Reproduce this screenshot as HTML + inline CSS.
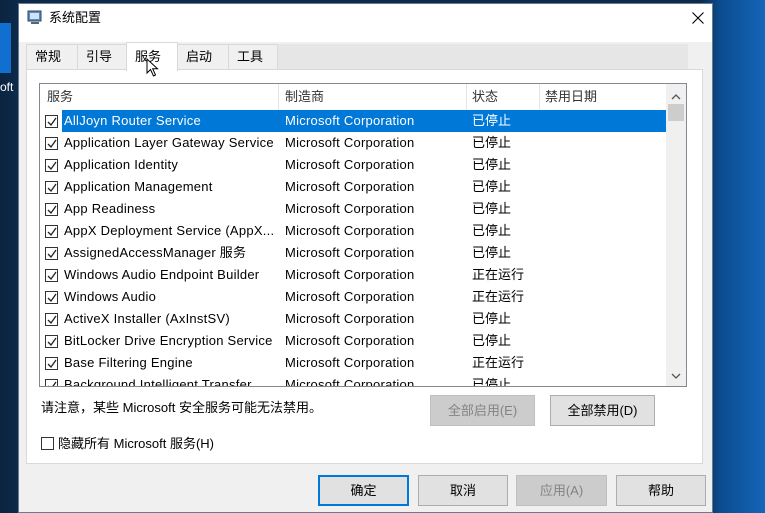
<!DOCTYPE html><html><head><meta charset="utf-8"><style>
*{box-sizing:border-box;margin:0;padding:0}
body{width:765px;height:510px;overflow:hidden;position:relative;background:linear-gradient(90deg,#0a2440 0,#0d2a4b 20px,#0d2a4b 700px,#0b4c8f 720px,#1565b8 765px);font-family:"Liberation Sans","Noto Sans CJK SC",sans-serif;font-size:13px;color:#000;line-height:16px}
.a{position:absolute}
.win{left:18px;top:3px;width:695px;height:510px;background:#f0f0f0;border:1px solid #6a7a90}
.t{white-space:nowrap;line-height:16px;height:16px}
.l{letter-spacing:0.25px}
.tab{top:44px;height:26px;border:1px solid #d9d9d9;border-bottom:none;background:#f0f0f0;padding:4px 0 0 8px;line-height:16px}
.btn{height:31px;border:1px solid #adadad;background:#e1e1e1;text-align:center;line-height:29px}
.cb{width:13px;height:13px;border:1px solid #333;background:#fff}
.cb svg{position:absolute;left:1px;top:1px}
</style></head><body>
<div class="a" style="left:0;top:23px;width:11px;height:50px;background:#1170cf"></div>
<div class="a t" style="left:0;top:79px;color:#fff;font-size:12px">oft</div>
<div class="a win"></div>
<div class="a" style="left:19px;top:4px;width:693px;height:38px;background:#fff"></div>
<svg class="a" style="left:27px;top:10px" width="16" height="16"><rect x="1" y="1" width="13" height="10" fill="#5b8bc4" stroke="#345"/><rect x="3" y="3" width="9" height="6" fill="#cfe3f7"/><rect x="4" y="12" width="8" height="2" fill="#567"/></svg>
<div class="a t" style="left:49px;top:10px">系统配置</div>
<svg class="a" style="left:692px;top:12px" width="12" height="12"><path d="M0.5 0.5 L11.5 11.5 M11.5 0.5 L0.5 11.5" stroke="#000" stroke-width="1.1"/></svg>
<div class="a" style="left:26px;top:44px;width:662px;height:26px;background:#e6e6e6"></div>
<div class="a tab" style="left:26px;width:52px">常规</div>
<div class="a tab" style="left:77px;width:50px">引导</div>
<div class="a tab" style="left:177px;width:52px">启动</div>
<div class="a tab" style="left:228px;width:50px">工具</div>
<div class="a" style="left:26px;top:69px;width:677px;height:395px;border:1px solid #d9d9d9;background:#fff"></div>
<div class="a tab" style="left:126px;top:42px;width:52px;height:29px;background:#fff;padding-top:6px">服务</div>
<svg class="a" style="left:146px;top:58px" width="14" height="20"><path d="M1 1 L1 15 L4.5 11.5 L7.5 18 L9.5 17 L6.7 10.7 L11.5 10.7 Z" fill="#fff" stroke="#000"/></svg>
<div class="a" style="left:39px;top:83px;width:648px;height:304px;border:1px solid #828790;background:#fff;overflow:hidden">
<div class="a" style="left:238px;top:0;width:1px;height:26px;background:#e5e5e5"></div>
<div class="a" style="left:426px;top:0;width:1px;height:26px;background:#e5e5e5"></div>
<div class="a" style="left:499px;top:0;width:1px;height:26px;background:#e5e5e5"></div>
<div class="a t" style="left:7px;top:5px;color:#333">服务</div>
<div class="a t" style="left:245px;top:5px;color:#333">制造商</div>
<div class="a t" style="left:432px;top:5px;color:#333">状态</div>
<div class="a t" style="left:505px;top:5px;color:#333">禁用日期</div>
<div class="a" style="left:22px;top:26px;width:604px;height:22px;background:#0078d7"></div>
<div class="a" style="left:626px;top:0;width:21px;height:302px;background:#f0f0f0"></div>
<svg class="a" style="left:631px;top:10px" width="10" height="6"><path d="M1 5 L5 1 L9 5" fill="none" stroke="#555" stroke-width="1.3"/></svg>
<div class="a" style="left:628px;top:20px;width:16px;height:17px;background:#cdcdcd"></div>
<svg class="a" style="left:631px;top:289px" width="10" height="6"><path d="M1 1 L5 5 L9 1" fill="none" stroke="#555" stroke-width="1.3"/></svg>
<div id="rows"></div>
</div>
<div class="a t" style="left:41px;top:400px">请注意，某些 Microsoft 安全服务可能无法禁用。</div>
<div class="a btn" style="left:430px;top:395px;width:105px;background:#cccccc;border-color:#bfbfbf;color:#838383">全部启用(E)</div>
<div class="a btn" style="left:550px;top:395px;width:105px">全部禁用(D)</div>
<div class="a cb" style="left:41px;top:437px"></div>
<div class="a t" style="left:58px;top:436px">隐藏所有 Microsoft 服务(H)</div>
<div class="a btn" style="left:318px;top:475px;width:91px;border:2px solid #0078d7;line-height:27px">确定</div>
<div class="a btn" style="left:418px;top:475px;width:90px">取消</div>
<div class="a btn" style="left:516px;top:475px;width:91px;background:#ccc;border-color:#bfbfbf;color:#838383">应用(A)</div>
<div class="a btn" style="left:616px;top:475px;width:90px">帮助</div>
<script>
var d=[["AllJoyn Router Service","已停止"],["Application Layer Gateway Service","已停止"],["Application Identity","已停止"],["Application Management","已停止"],["App Readiness","已停止"],["AppX Deployment Service (AppX...","已停止"],["AssignedAccessManager 服务","已停止"],["Windows Audio Endpoint Builder","正在运行"],["Windows Audio","正在运行"],["ActiveX Installer (AxInstSV)","已停止"],["BitLocker Drive Encryption Service","已停止"],["Base Filtering Engine","正在运行"],["Background Intelligent Transfer","已停止"]];
var h="";d.forEach(function(r,i){var y=26+i*22,c=i==0?"#fff":"#000";
h+='<div class="a cb" style="left:5px;top:'+(y+5)+'px"><svg width="10" height="10"><path d="M1 5 L4 8 L9 1" fill="none" stroke="#222" stroke-width="1.3"/></svg></div>';
h+='<div class="a t l" style="left:24px;top:'+(y+3)+'px;color:'+c+'">'+r[0]+'</div><div class="a t l" style="left:245px;top:'+(y+3)+'px;color:'+c+'">Microsoft Corporation</div><div class="a t" style="left:432px;top:'+(y+3)+'px;color:'+c+'">'+r[1]+'</div>';});
document.getElementById("rows").innerHTML=h;
</script>
</body></html>
